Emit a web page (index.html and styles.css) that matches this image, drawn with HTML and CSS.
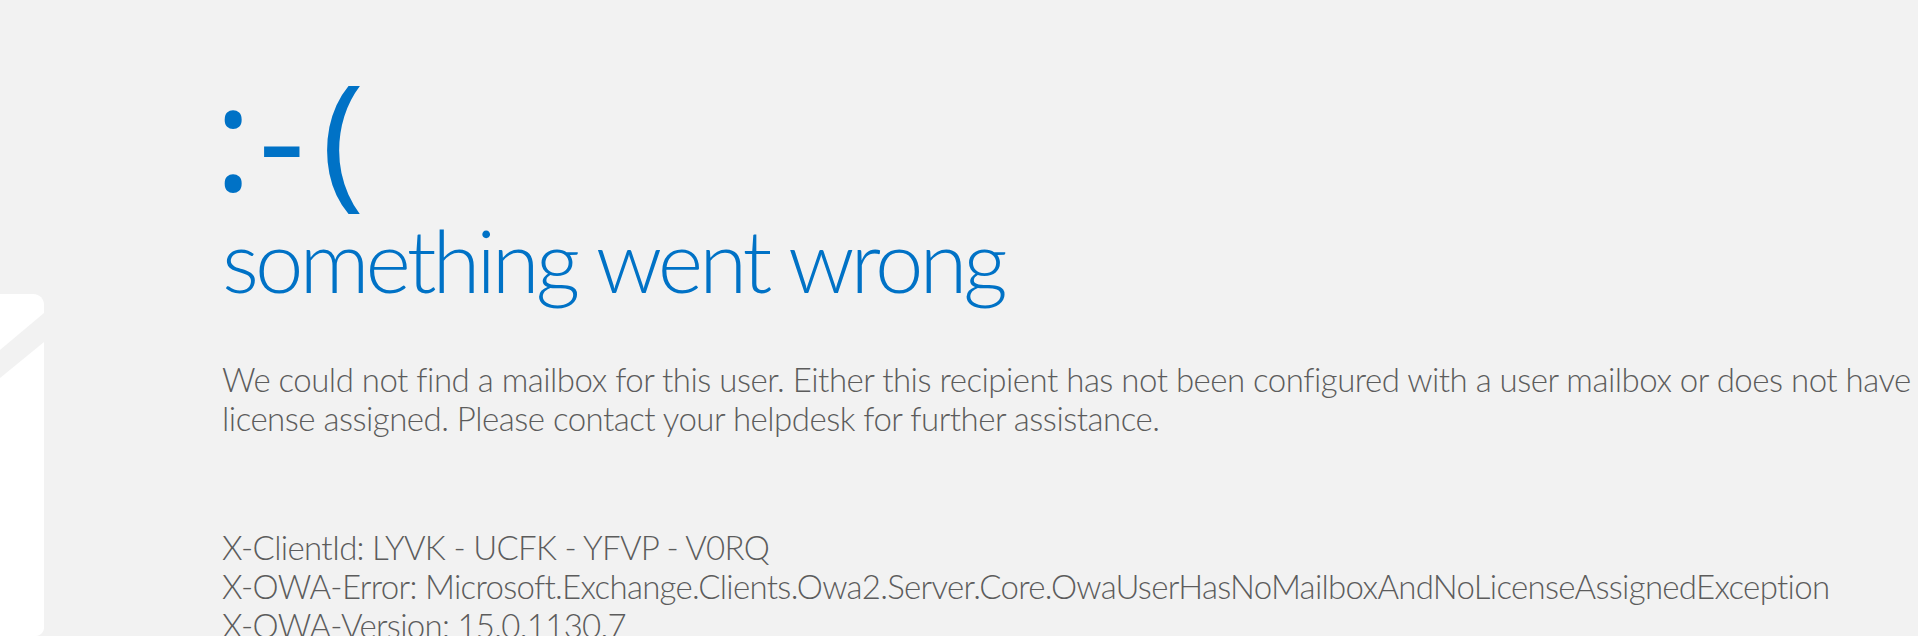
FILE: index.html
```html
<!DOCTYPE html>
<html lang="en">
<head>
<meta charset="utf-8">
<title>something went wrong</title>
<link rel="stylesheet" href="styles.css">
</head>
<body>
<svg class="bg-logo" width="44" height="346" viewBox="0 290 44 346" aria-hidden="true">
  <path d="M0 294 H33 C40 294 44 299 44 305 V313 L0 350 Z" fill="#ffffff"/>
  <path d="M44 342 L0 378 V636 H36 C40 636 44 632 44 628 Z" fill="#ffffff"/>
</svg>
<main class="error-page">
  <div class="smiley"><span class="colon">:</span><span class="dash">-</span><span class="paren">(</span></div>
  <h1 class="title">something went wrong</h1>
  <p class="message">We could not find a mailbox for this user. Either this recipient has not been configured with a user mailbox or does not have a<br>license assigned. Please contact your helpdesk for further assistance.</p>
  <div class="details">
    <div class="detail-line">X-ClientId: LYVK - UCFK - YFVP - V0RQ</div>
    <div class="detail-line">X-OWA-Error: Microsoft.Exchange.Clients.Owa2.Server.Core.OwaUserHasNoMailboxAndNoLicenseAssignedException</div>
    <div class="detail-line">X-OWA-Version: 15.0.1130.7</div>
  </div>
</main>
</body>
</html>
```
FILE: styles.css
```css
html, body {
  margin: 0;
  padding: 0;
  height: 100%;
}
body {
  background: #f2f2f2;
  overflow: hidden;
  font-family: Lato, "Open Sans", "Liberation Sans", sans-serif;
  font-weight: 300;
  position: relative;
}
.bg-logo {
  position: absolute;
  left: 0;
  top: 290px;
  display: block;
}
.error-page {
  position: relative;
  padding: 60px 0 0 222px;
}
.smiley {
  color: #0072c6;
  font-family: "Open Sans", sans-serif;
  font-size: 146px;
  font-weight: 400;
  line-height: 150px;
  height: 150px;
  white-space: nowrap;
}
.colon {
  margin-left: -8px;
}
.dash {
  margin-left: 6px;
}
.paren {
  margin-left: 16px;
}
.title {
  margin: 0;
  color: #0072c6;
  font-weight: 300;
  font-size: 87px;
  letter-spacing: -4px;
  word-spacing: 2px;
  line-height: 100px;
  white-space: nowrap;
}
.message {
  margin: 50px 0 0 0;
  color: #5c5c5c;
  font-size: 33px;
  letter-spacing: -0.5px;
  line-height: 39px;
  white-space: nowrap;
}
.details {
  margin-top: 90px;
  color: #5c5c5c;
  font-size: 33px;
  letter-spacing: -0.7px;
  line-height: 39px;
  white-space: nowrap;
}
```
